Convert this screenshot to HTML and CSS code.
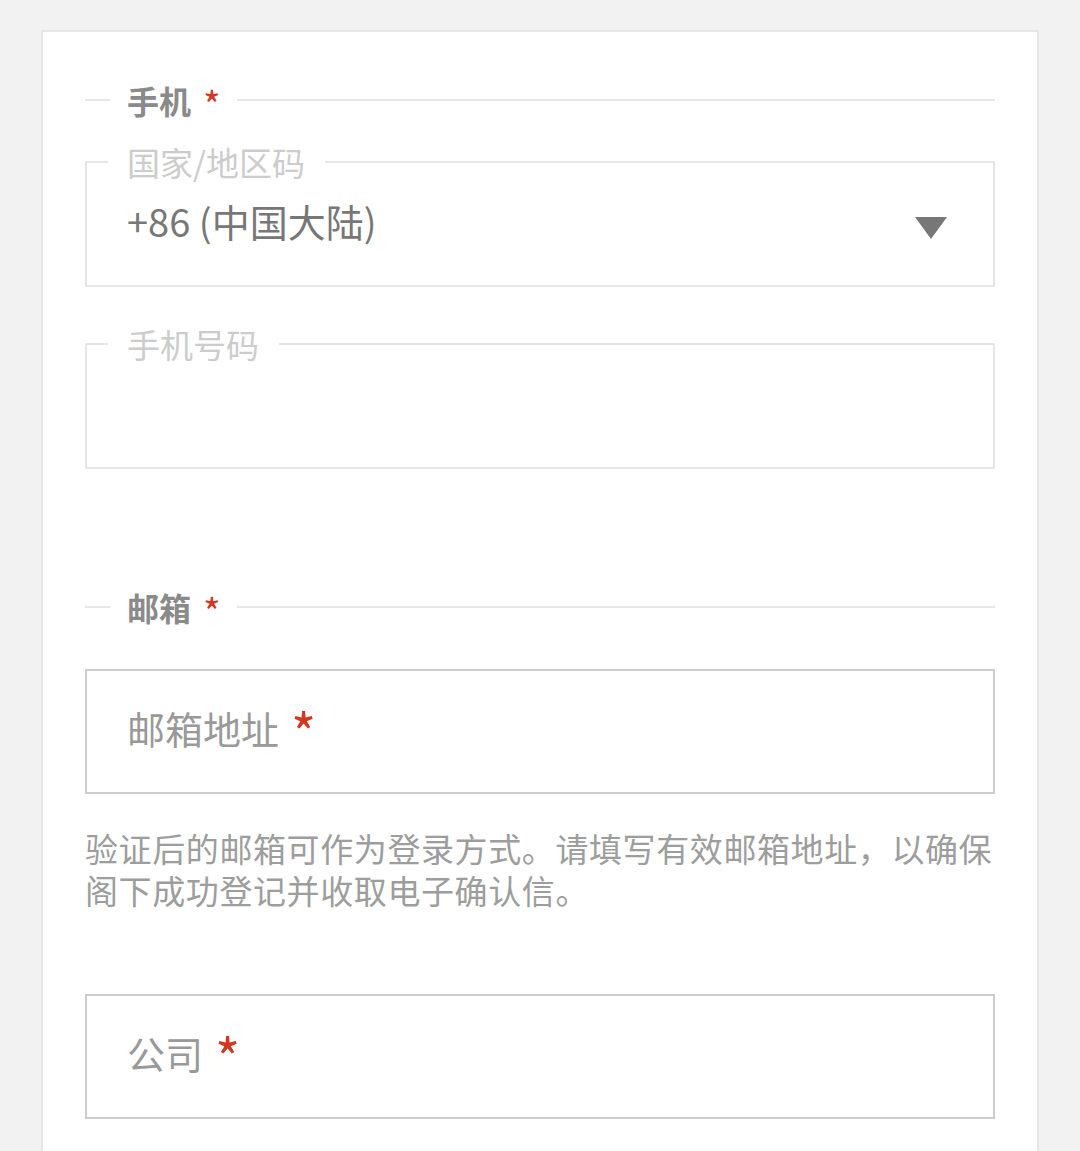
FILE: index.html
```html
<!DOCTYPE html>
<html lang="zh-CN">
<head>
    <meta charset="UTF-8">
    <meta name="viewport" content="width=device-width, initial-scale=1.0">
    <title>登记信息</title>
    <link rel="stylesheet" href="styles.css">
</head>
<body>
    <div class="card">
        <div class="group-title">手机<span class="req">*</span></div>

        <fieldset class="field-set">
            <legend>国家/地区码</legend>
            <div class="select-row">
                <span class="select-value">+86 (中国大陆)</span>
                <svg class="caret" width="32" height="22" viewBox="0 0 32 22">
                    <polygon points="0,0 32,0 16,22" fill="#777"></polygon>
                </svg>
            </div>
        </fieldset>

        <fieldset class="field-set phone">
            <legend>手机号码</legend>
            <div class="phone-input"></div>
        </fieldset>

        <div class="group-title email-title">邮箱<span class="req">*</span></div>

        <div class="input-box">
            <span class="placeholder">邮箱地址</span><span class="req">*</span>
        </div>

        <p class="help">验证后的邮箱可作为登录方式。请填写有效邮箱地址，以确保阁下成功登记并收取电子确认信。</p>

        <div class="input-box company">
            <span class="placeholder">公司</span><span class="req">*</span>
        </div>
    </div>
</body>
</html>
```

FILE: styles.css
```css
body {
    margin: 0;
    background-color: #f2f2f2;
    font-family: "Noto Sans CJK SC", "Noto Sans", sans-serif;
}
.card {
    margin: 30px 0 0 41px;
    width: 998px;
    box-sizing: border-box;
    background: #fff;
    border: 2px solid #e6e6e6;
    border-bottom: none;
    padding: 48px 42px 60px 42px;
}
.req {
    color: #d2381f; /* red required mark */
}

/* section title with line on both sides */
.group-title {
    display: flex;
    align-items: center;
    height: 40px;
    font-size: 32px;
    font-weight: 700;
    color: #8a8a8a;
}
.group-title::before {
    content: "";
    width: 25px;
    height: 2px;
    background: #e6e6e6;
    margin-right: 17px;
}
.group-title::after {
    content: "";
    flex: 1;
    height: 2px;
    background: #e6e6e6;
    margin-left: 16px;
}
.group-title .req {
    font-weight: 400;
    font-size: 38px;
    margin-left: 12px;
    margin-top: 6px;
}
.email-title {
    margin-top: 118px;
}

/* notched fields */
.field-set {
    margin: 22px 0 0 0;
    padding: 0 46px 0 21px;
    border: 2px solid #e6e6e6;
    min-width: 0;
}
.field-set legend {
    padding: 0 20px 0 19px;
    font-size: 33px;
    line-height: 40px;
    color: #cccccc;
}
.field-set.phone {
    margin-top: 37px;
}
.select-row {
    display: flex;
    align-items: center;
    justify-content: space-between;
    height: 103px;
    box-sizing: border-box;
    padding: 0 0 26px 19px;
}
.select-value {
    font-size: 38px;
    color: #777;
}
.caret {
    margin-top: 14px;
}
.phone-input {
    height: 103px;
}

/* plain boxes */
.input-box {
    display: flex;
    align-items: center;
    height: 125px;
    box-sizing: border-box;
    margin-top: 42px;
    padding: 0 0 8px 40px;
    border: 2px solid #cccccc;
    font-size: 38px;
}
.placeholder {
    color: #999;
}
.input-box .req {
    font-size: 54px;
    margin-left: 12px;
    margin-top: 6px;
}
.input-box.company {
    margin-top: 83px;
}
.help {
    margin: 33px 0 0 0;
    font-size: 33px;
    letter-spacing: 0.6px;
    line-height: 42px;
    color: #9d9d9d;
}
```
